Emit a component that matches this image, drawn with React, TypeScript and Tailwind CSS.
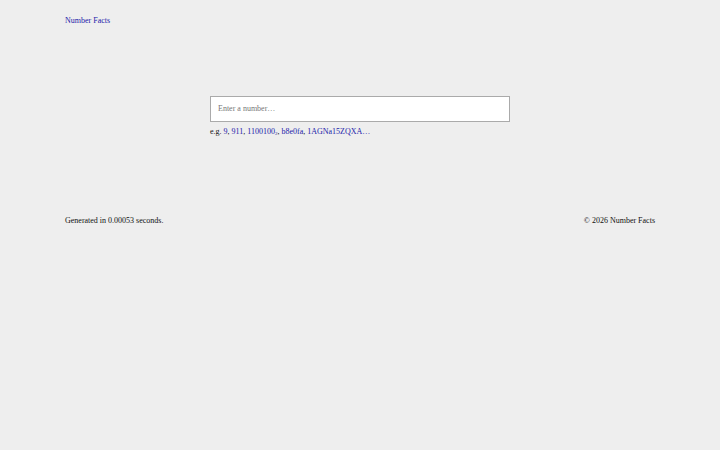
import React from "react";

export default function App() {
  return (
    <div className="min-h-[450px] w-full bg-[#eeeeee] text-[8px] leading-[10px] text-[#111]" style={{ fontFamily: '"Liberation Serif", "Times New Roman", serif' }}>
      <div className="mx-auto w-[590px]">
        <div className="pt-[16px] h-[26px]">
          <a href="#" className="text-[#2222aa]">Number Facts</a>
        </div>
        <div className="mt-[70px] flex flex-col items-center">
          <div className="w-[300px]">
            <div className="h-[26px] w-[300px] border border-[#aaaaaa] bg-white px-[7px] flex items-center text-[#777]">
              Enter a number…
            </div>
            <div className="mt-[5px] h-[10px]">
              e.g. <a className="text-[#2222aa]">9</a>, <a className="text-[#2222aa]">911</a>,{" "}
              <a className="text-[#2222aa]">1100100<sub className="text-[5px]">2</sub></a>,{" "}
              <a className="text-[#2222aa]">b8e0fa</a>, <a className="text-[#2222aa]">1AGNa15ZQXA…</a>
            </div>
          </div>
        </div>
        <div className="mt-[79px] flex justify-between">
          <span>Generated in 0.00053 seconds.</span>
          <span>© 2026 Number Facts</span>
        </div>
      </div>
    </div>
  );
}
